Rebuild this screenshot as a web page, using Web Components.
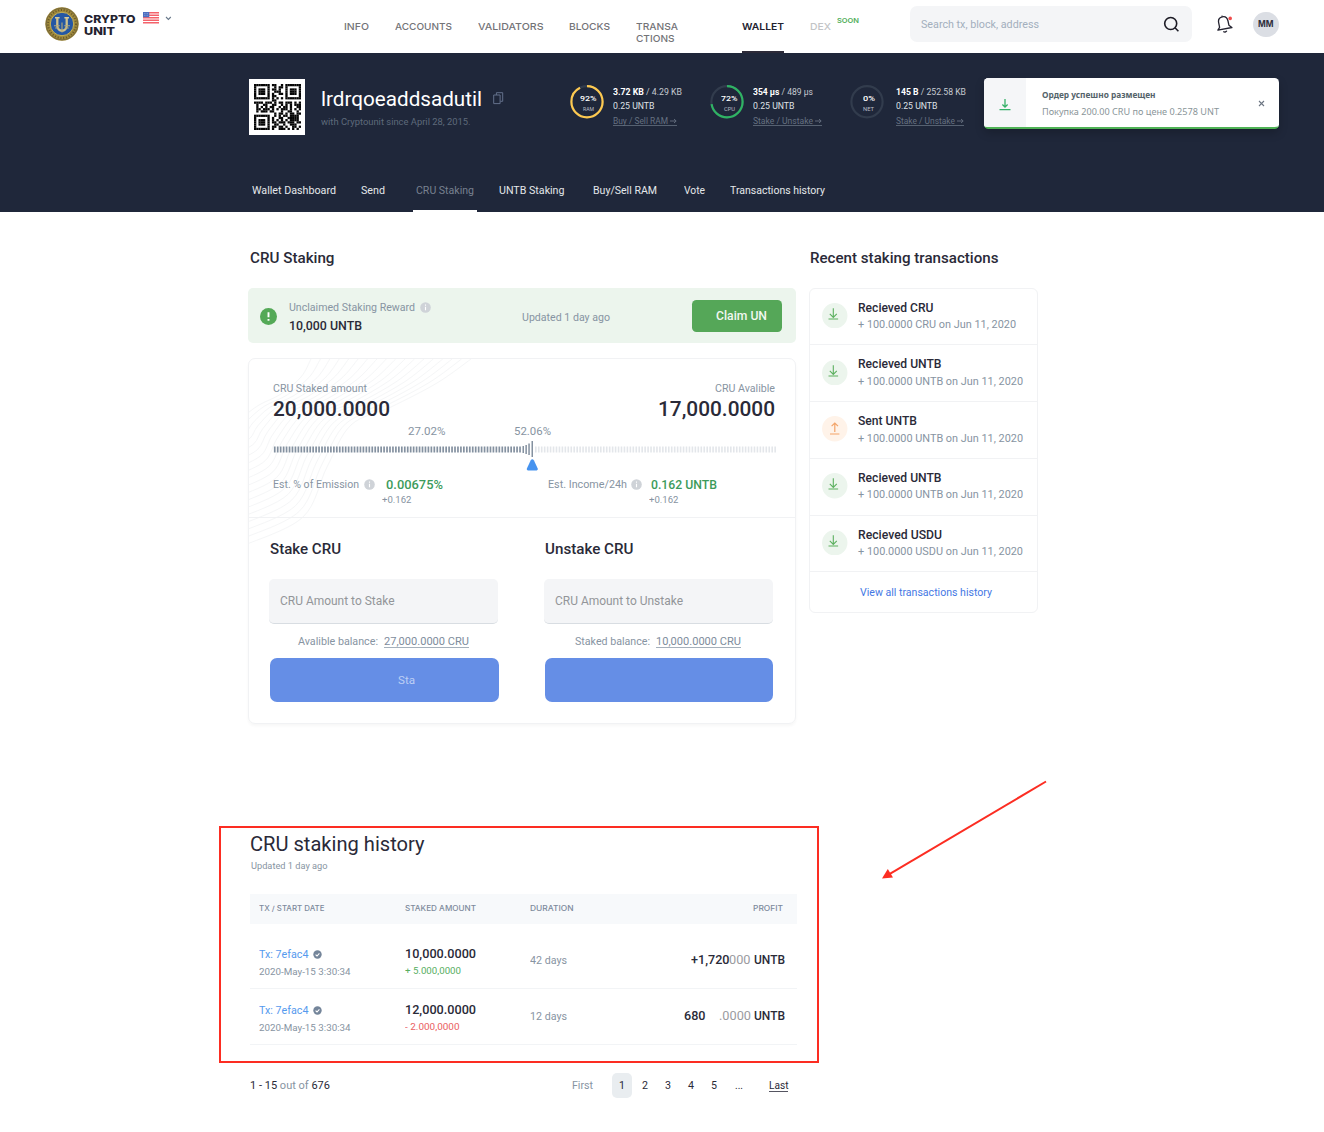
<!DOCTYPE html>
<html lang="en">
<head>
<meta charset="utf-8">
<title>CryptoUnit wallet</title>
<style>
html,body{margin:0;padding:0;background:#fff}
body{width:1324px;height:1132px;overflow:hidden;font-family:Roboto,"Noto Sans","Liberation Sans",sans-serif;color:#2a2a38}
</style>
</head>
<body>
<wallet-page></wallet-page>
<script>
const define = (tag, css, view) => customElements.define(tag, class extends HTMLElement {
  constructor() {
    super();
    const root = this.attachShadow({ mode: 'open' });
    root.innerHTML = `<style>:host{display:block;box-sizing:border-box}*{box-sizing:border-box}${css}</style>` + view(name => this.getAttribute(name));
  }
});

/* page frame */
define('wallet-page', `
  :host{position:relative;width:1324px;height:1132px}
  main{display:flex;align-items:flex-start;padding:35px 0 0 248px;gap:13.5px;height:614px}
  .left{width:548px}.right{width:228.5px}
  h2{margin:0 0 18.5px 2px;font-size:14px}
  .right h2{margin-left:.5px}
  .note{position:absolute;left:219px;top:826px;width:600px;height:237px;border:2px solid #fc2d22}
  .arrow{position:absolute;left:875px;top:775px}
`, () => `
  <site-header></site-header>
  <account-hero></account-hero>
  <main>
    <div class="left"><h2><ui-text s="14.4" b="500" lh="22" w="84.5" y="1">CRU Staking</ui-text></h2>
      <reward-banner></reward-banner><stake-panel></stake-panel></div>
    <div class="right"><h2><ui-text s="14.4" b="500" lh="22" w="188.5" y="1">Recent staking transactions</ui-text></h2>
      <tx-list></tx-list></div>
  </main>
  <staking-history></staking-history>
  <page-nav></page-nav>
  <div class="note"></div>
  <svg class="arrow" width="180" height="110"><path d="M171 6.5 14 99.3" stroke="#fc2d22" stroke-width="2"/><path d="M7 103.4 12.8 94 18 102.6Z" fill="#fc2d22"/></svg>
`);

/* header */
define('site-header', `
  :host{display:flex;align-items:flex-start;height:53px;padding-left:45px;background:#fff}
  .brand{margin:13px 0 0 5px;width:52px}
  .flag{margin:12px 0 0 7px}.chev{margin:15px 0 0 6px}
  nav{display:flex;gap:26px;margin-left:171.7px;height:53px}
  .wrap{width:79.5px}
  search-box{margin:6px 0 0 51.3px}
  .bell{margin:14px 0 0 25px}
  .av{width:25.5px;height:25.5px;border-radius:50%;background:#dbdee4;margin:11.5px 0 0 20.5px;display:flex;justify-content:center;align-items:center}
  .dex{display:flex;gap:6px}
  coin-logo{margin-top:7px}
`, () => `
  <coin-logo></coin-logo>
  <div class="brand"><ui-text f="Inter" s="11" b="800" lh="12" w="51.5" c="#23222f">CRYPTO</ui-text><ui-text f="Inter" s="11" b="800" lh="12" w="31" c="#23222f">UNIT</ui-text></div>
  <svg class="flag" width="16" height="11.5" viewBox="0 0 16 11.5"><rect width="16" height="11.5" fill="#fff"/><path d="M0 .8h16M0 3.2h16M0 5.7h16M0 8.2h16M0 10.7h16" stroke="#f4626b" stroke-width="1.4"/><rect width="6.3" height="5.2" fill="#4d6fc0"/><path d="M1 1.5h4.4M1 3.3h4.4" stroke="#a9b9e3" stroke-width=".6" stroke-dasharray=".8 .8"/></svg>
  <svg class="chev" width="7" height="6" fill="none" stroke="#68788a" stroke-width="1.1"><path d="M1 2 3.4 4.4 5.8 2"/></svg>
  <nav>
    <nav-item w="25">INFO</nav-item><nav-item w="57">ACCOUNTS</nav-item><nav-item w="65.5">VALIDATORS</nav-item><nav-item w="41">BLOCKS</nav-item>
    <div class="wrap"><nav-item w="42" second="CTIONS">TRANSA</nav-item></div>
    <nav-item w="42" active>WALLET</nav-item>
    <div class="dex"><nav-item w="21" c="#c2c4c6">DEX</nav-item><ui-text f="Inter" s="6.8" b="600" lh="12" w="22" c="#4fae59" mt="15">SOON</ui-text></div>
  </nav>
  <search-box></search-box>
  <svg class="bell" width="16" height="21" viewBox="0 0 16 21" fill="none"><path d="M.9 16.2 2.6 13.4 1.7 8.9C1 5.6 2.6 3.4 5.3 2.8S10.3 4 11 7l.9 4.2 3 2.3Z" stroke="#23222f" stroke-width="1.3" stroke-linejoin="round"/><path d="M5.2 2.7 4.9 1.6M6.3 17.4c1.3 1 2.8.8 3.5-.6" stroke="#23222f" stroke-width="1.3"/><circle cx="13.2" cy="4.4" r="1.8" fill="#f04c4c"/></svg>
  <div class="av"><ui-text f="Inter" s="8.8" b="700" lh="14" w="15.5" c="#2f2e3c">MM</ui-text></div>
`);

define('coin-logo', `:host{width:34px;height:34px}svg{display:block}`, () => `
  <svg width="34" height="34" viewBox="0 0 34 34"><circle cx="17" cy="17" r="16.7" fill="#a08a3c"/><circle cx="17" cy="17" r="15.9" fill="none" stroke="#77683a" stroke-width="1"/><circle cx="17" cy="17" r="14" fill="none" stroke="#6b5a28" stroke-width="2" stroke-dasharray="1.1 1.7"/><circle cx="17" cy="17" r="11.7" fill="#2457a4" stroke="#c9b153" stroke-width="1"/><path d="M10 10.7h4.6M19.4 10.7H24" stroke="#d6cda0" stroke-width="1.5"/><path d="M12.3 10.7v8.1c0 6.6 9.4 6.6 9.4 0v-8.1" fill="none" stroke="#cfc28e" stroke-width="2.3"/><path d="M9 18.8h5.8M19.2 18.8H25M10.2 21h4M19.8 21h4M17 15.5v10" fill="none" stroke="#b3a877" stroke-width="1.1"/></svg>
`);

define('nav-item', `
  :host{height:53px;padding-top:20.5px;position:relative}
  :host([active])::after{content:"";position:absolute;left:0;right:0;bottom:0;height:2.5px;background:#2c2a38}
`, a => `<ui-text f="Inter" s="9.6" b="${a('active') !== null ? 600 : 500}" lh="12" w="${a('w')}" c="${a('active') !== null ? '#23222f' : a('c') || '#737377'}"><slot></slot></ui-text>
  ${a('second') ? `<ui-text f="Inter" s="9.6" b="500" lh="12" w="38.5" c="#737377">${a('second')}</ui-text>` : ''}`);

define('search-box', `
  :host{display:flex;justify-content:space-between;align-items:center;width:282px;height:36px;border-radius:7px;background:#f4f5f7;padding:0 11.5px 0 11px}
`, () => `<ui-text s="10.7" w="118" c="#a3afbd" y=".5">Search tx, block, address</ui-text>
  <svg width="17" height="17" fill="none" stroke="#1c1b25" stroke-width="1.6"><circle cx="7.7" cy="7.5" r="6"/><path d="m12 11.8 3.4 3.4"/></svg>`);

/* hero */
define('account-hero', `
  :host{height:159px;background:#1f273a;padding-left:248.5px;display:flex;flex-direction:column;justify-content:space-between}
  .top{display:flex;align-items:flex-start;padding-top:25px}
  .who{margin:10px 0 0 16.2px;width:161.3px}
  .copy{margin:13.5px 0 0 10.5px}
  resource-gauge{margin-top:7px}
  .tabs{display:flex;padding-left:3.5px;height:31px}
`, () => `
  <div class="top">
    <qr-code></qr-code>
    <div class="who"><ui-text s="20" lh="22" w="161" c="#fff" y="-.5">lrdrqoeaddsadutil</ui-text><ui-text s="9" lh="14" w="149.5" c="#5e6a7b" mt="5">with Cryptounit since April 28, 2015.</ui-text></div>
    <svg class="copy" width="11" height="13" fill="none" stroke="#63708a" stroke-width="1"><path d="M.7 3h6.4v8.6H.7ZM3.4 3V.7h6.3v8.6H7.4"/></svg>
    <resource-gauge style="margin-left:65.6px;width:140.7px" pct="92" name="RAM" color="#fdc950" used="3.72 KB" total="4.29 KB" tw="69" link="Buy / Sell RAM" lw="64"></resource-gauge>
    <resource-gauge style="width:139.5px" pct="72" name="CPU" color="#2fb364" used="354 µs" total="489 µs" tw="60" link="Stake / Unstake" lw="69"></resource-gauge>
    <resource-gauge style="width:134px" pct="0" name="NET" color="none" used="145 B" total="252.58 KB" tw="70" link="Stake / Unstake" lw="68" gap="12"></resource-gauge>
    <toast-card></toast-card>
  </div>
  <div class="tabs">
    <hero-tab w="84">Wallet Dashboard</hero-tab><hero-tab w="24" ml="25">Send</hero-tab><hero-tab w="58" ml="31" active>CRU Staking</hero-tab><hero-tab w="65.5" ml="25">UNTB Staking</hero-tab><hero-tab w="64" ml="28">Buy/Sell RAM</hero-tab><hero-tab w="21" ml="27">Vote</hero-tab><hero-tab w="95" ml="25">Transactions history</hero-tab>
  </div>
`);

define('hero-tab', `
  :host{position:relative;height:31px}
  :host([active])::after{content:"";position:absolute;left:-3.5px;width:64px;bottom:0;height:2.3px;background:#fff}
`, a => `<ui-text s="10.6" lh="20" w="${a('w')}" c="${a('active') !== null ? '#788190' : '#e4e7ea'}" style="margin-left:${a('ml') || 0}px"><slot></slot></ui-text>
  ${a('ml') ? `<style>:host([active])::after{left:${a('ml') - 3.5}px}</style>` : ''}`);

const QR = [
  '#######.##..#.#######','#.....#..#.##.#.....#','#.###.#.##.#..#.###.#','#.###.#..###..#.###.#','#.###.#.#..##.#.###.#','#.....#.##....#.....#','#######.#.#.#.#######',
  '........##...........','####.###.#.##.###.#.#','.#..##..##..#.#.#.###','.#.#.#.##..#.##.#..##','.##.###.#.#.###.#.#.#','.#.###.##...#..##..#.',
  '.........#.##.#.##.##','#######..#.#.##.####.','#.....#.#..##..#####.','#.###.#.#.#.#.#.####.','#.###.#.##.###.###.##','#.###.#..##..#..###..','#.....#.##.##.#..##.#','#######.#..###.#.#.#.'];
define('qr-code', `:host{width:56.5px;height:56px;margin-top:1px;background:#fff;padding:5px}svg{display:block}`, () =>
  `<svg width="47" height="46" viewBox="0 0 21 21" preserveAspectRatio="none" fill="#050505">${QR.map((r, y) => [...r].map((c, x) => c === '#' ? `<rect x="${x}" y="${y}" width="1.03" height="1.03"/>` : '').join('')).join('')}</svg>`);

define('resource-gauge', `
  :host{display:flex;align-items:flex-start}
  .ring{display:grid;width:34px;height:34px;flex:none}
  .ring>*{grid-area:1/1}
  .lab{display:flex;flex-direction:column;align-items:center;padding:7px 0 0 3.5px}
  .lk{display:flex;align-items:center;justify-content:space-between;height:14.5px;border:0}
  .lk svg{margin-top:1px}
  .line{height:1px;background:#566171;margin-top:-2.7px}
`, a => {
  const c = 2 * Math.PI * 15.6;
  return `<div class="ring"><svg width="34" height="34" fill="none" stroke-width="2.2"><circle cx="17" cy="16.7" r="15.6" stroke="#323c4d"/><circle cx="17" cy="16.7" r="15.6" stroke="${a('color')}" stroke-dasharray="${c * a('pct') / 100} ${c}" transform="rotate(-90 17 16.7)"/></svg>
    <div class="lab"><ui-text s="7.8" b="500" lh="14" w="${a('pct') == 0 ? 12 : 16.5}" c="#fff">${a('pct')}%</ui-text><ui-text s="5.6" lh="6" w="11" c="#b9bec7" y="-.5">${a('name')}</ui-text></div></div>
  <div style="margin:-.5px 0 0 ${a('gap') || 9}px"><ui-text s="8.9" lh="14.5" w="${a('tw')}" c="#c6cad1"><b style="color:#fff">${a('used')}</b> / ${a('total')}</ui-text><ui-text s="8.9" lh="14.5" w="41.5" c="#dfe2e6">0.25 UNTB</ui-text>
  <div style="width:${a('lw')}px"><div class="lk"><ui-text s="8.9" lh="14.5" w="${a('lw') - 9}" c="#667181" y="-.5">${a('link')}</ui-text><svg width="7" height="6" fill="none" stroke="#667181" stroke-width=".9"><path d="M0 3h6M4 1l2.2 2L4 5"/></svg></div><div class="line"></div></div></div>`;
});

define('toast-card', `
  :host{display:flex;width:295px;height:50.5px;border-radius:4.5px;background:#fff;border-bottom:2px solid #4fb255;overflow:hidden;box-shadow:0 4px 10px #0003;flex:none}
  .ic{width:42.5px;background:#f5f6f8;padding:19px 0 0 15.5px}
  .tx{margin:10px 0 0 15.5px;width:177px}
  .x{margin:22px 0 0 39.5px}
`, () => `<div class="ic"><svg width="12" height="14" fill="none" stroke="#35b168" stroke-width="1.3"><path d="M.5 11.7h11M6 1v8M3.4 6.5 6 9.1l2.6-2.6"/></svg></div>
  <div class="tx"><ui-text f="Noto Sans" s="9.1" b="700" lh="14" w="113.5" c="#54636a">Ордер успешно размещен</ui-text><ui-text f="Noto Sans" s="9.2" lh="14" w="177" c="#8a9599" mt="2.5">Покупка 200.00 CRU по цене 0.2578 UNT</ui-text></div>
  <svg class="x" width="8" height="8" stroke="#6d7683" stroke-width="1.1"><path d="m1 1 5 5M6 1 1 6"/></svg>`);

/* shared icons */
define('info-dot', `:host{width:11px;height:11px;flex:none}svg{display:block}`, () =>
  `<svg width="11" height="11"><circle cx="5.5" cy="5.5" r="5.3" fill="#cfd3d8"/><path d="M5.5 4.8v3.4M5.5 2.5v1.2" stroke="#fff" stroke-width="1.1"/></svg>`);

/* reward */
define('reward-banner', `
  :host{display:flex;align-items:flex-start;height:55.5px;margin-top:17px;border-radius:5px;background:#ecf5ed;padding-left:12.3px}
  .ok{margin-top:20px}.c{margin:11px 0 0 11.3px;width:233px}
  .r{display:flex;gap:5px;align-items:center}
  .b{width:90.5px;height:32px;margin:12px 0 0 82px;border-radius:4.5px;background:#55a758;padding:7.5px 0 0 24.5px}
`, () => `<svg class="ok" width="17" height="17"><circle cx="8.5" cy="8.5" r="8.5" fill="#54a957"/><path d="M8.5 4.3v5M8.5 10.9v1.8" stroke="#fff" stroke-width="1.9"/></svg>
  <div class="c"><div class="r"><ui-text s="10.7" lh="17" w="126" c="#8794a2">Unclaimed Staking Reward</ui-text><info-dot></info-dot></div><ui-text s="12" b="500" lh="18" w="73" mt="1">10,000 UNTB</ui-text></div>
  <ui-text s="10.7" lh="18" w="88" c="#8794a2" mt="21">Updated 1 day ago</ui-text>
  <div class="b"><ui-text s="11.9" b="500" lh="17" w="51" c="#f1f8f1" y="1">Claim UN</ui-text></div>`);

/* staking card */
define('contour-lines', `:host{position:absolute;left:0;top:0;width:230px;height:190px;overflow:hidden;pointer-events:none}`, () => {
  const inner = [[62, 0], [52, 18], [32, 35], [10, 46], [-6, 58], [-10, 62], [-14, 66]];
  const outer = [[222, 0], [188, 24], [142, 48], [102, 66], [78, 108], [54, 158], [-4, 186]];
  let out = '';
  for (let i = 0; i < 18; i++) {
    const k = i / 17;
    const p = inner.map((q, j) => [q[0] + (outer[j][0] - q[0]) * k, q[1] + (outer[j][1] - q[1]) * k]);
    let d = `M${p[0]}`;
    for (let j = 0; j < p.length - 1; j++) {
      const a = p[Math.max(j - 1, 0)], b = p[j], c = p[j + 1], e = p[Math.min(j + 2, p.length - 1)];
      d += `C${b[0] + (c[0] - a[0]) / 6} ${b[1] + (c[1] - a[1]) / 6} ${c[0] - (e[0] - b[0]) / 6} ${c[1] - (e[1] - b[1]) / 6} ${c[0]} ${c[1]}`;
    }
    out += `<path d="${d}"/>`;
  }
  return `<svg width="230" height="190" fill="none" stroke="#f5f6f7" stroke-width="1">${out}</svg>`;
});

define('stake-panel', `
  :host{position:relative;height:366.5px;margin-top:14.5px;border:1px solid #f1f2f4;border-radius:7px;box-shadow:0 2px 3px #00000009}
  .sum{position:relative;height:159px;border-bottom:1px solid #f1f2f4;padding:20.5px 20.2px 0 24.2px}
  .row{display:flex;justify-content:space-between}
  .pct{display:flex;padding-left:135px;gap:68.5px}
  .est{display:flex;margin-top:4.5px}
  .est>div{width:274.5px;flex:none}.l{display:flex;align-items:center}
  info-dot{margin:0 10.5px 0 5px}
  .est>div+div info-dot{margin:0 9.5px 0 4px}
  .forms{display:flex;padding-left:20px;gap:45.5px;position:relative}
  stake-meter{display:block}
`, () => `<contour-lines></contour-lines>
  <div class="sum">
    <div class="row"><ui-text s="10.6" lh="18" w="94" c="#8794a2" y=".5">CRU Staked amount</ui-text><ui-text s="10.6" lh="18" w="60" c="#8794a2" y=".5">CRU Avalible</ui-text></div>
    <div class="row"><ui-text s="19.8" b="500" lh="25" w="117">20,000.0000</ui-text><ui-text s="19.8" b="500" lh="25" w="117">17,000.0000</ui-text></div>
    <div class="pct"><ui-text s="10.5" lh="20" w="37.5" c="#8794a2">27.02%</ui-text><ui-text s="10.5" lh="20" w="37" c="#8794a2">52.06%</ui-text></div>
    <stake-meter></stake-meter>
    <div class="est">
      <div><div class="l"><ui-text s="10.7" lh="16" w="86" c="#8794a2">Est. % of Emission</ui-text><info-dot></info-dot><ui-text s="12.2" b="500" lh="16" w="57" c="#3c9b5b">0.00675%</ui-text></div><ui-text s="9" lh="15" w="29.5" c="#8794a2" style="margin-left:108.5px">+0.162</ui-text></div>
      <div><div class="l"><ui-text s="10.7" lh="16" w="79" c="#8794a2">Est. Income/24h</ui-text><info-dot></info-dot><ui-text s="12.2" b="500" lh="16" w="66" c="#3c9b5b">0.162 UNTB</ui-text></div><ui-text s="9" lh="15" w="29.5" c="#8794a2" style="margin-left:101px">+0.162</ui-text></div>
    </div>
  </div>
  <div class="forms">
    <stake-form title-text="Stake CRU" tw="71" hint="CRU Amount to Stake" hw="114.5" bal="Avalible balance:" bw="80" val="27,000.0000 CRU" off="29" button="Sta"></stake-form>
    <stake-form title-text="Unstake CRU" tw="88.5" hint="CRU Amount to Unstake" hw="128" bal="Staked balance:" bw="75" val="10,000.0000 CRU" off="31.5"></stake-form>
  </div>`);

define('stake-meter', `:host{height:30px}svg{display:block}`, () => {
  let t = '';
  const pitch = 2.955;
  for (let x = .9; x < 249; x += pitch) t += `<rect x="${x.toFixed(2)}" y="4.5" width="1.7" height="6" fill="#8491a0"/>`;
  for (let x = 262; x < 501.5; x += pitch) t += `<rect x="${x.toFixed(2)}" y="4.5" width="1.6" height="6" fill="#e3e6ea"/>`;
  [[249.5, 4, 7], [252.4, 3, 9], [255.3, 1.5, 11.5], [258.5, -1, 16]].forEach(([x, y, h]) => t += `<rect x="${x}" y="${y}" width="1.5" height="${h}" fill="#8491a0"/>`);
  return `<svg width="504" height="30" overflow="visible">${t}<path d="M257.6 18.6q1.7-2.6 3.4 0l3.7 8q.6 1.8-1 1.8h-8.8q-1.6 0-1-1.8Z" fill="#4793ef"/></svg>`;
});

define('stake-form', `
  :host{width:229px}
  .in{height:45px;margin-top:17.5px;border-radius:5px;background:#f4f5f7;border-bottom:1.5px solid #d8dde2;padding:13.5px 0 0 11px}
  .bal{display:flex;gap:6px;height:16px;margin:9.5px 0 0}
  .u{border-bottom:1px solid #a5b0bb;height:14.7px}
  .btn{height:44px;margin:8.5px 0 0 1.3px;border-radius:7px;background:#658ee6;padding:14px 0 0 128px;width:228.5px}
`, a => `<ui-text s="14.4" b="500" lh="24" w="${a('tw')}" mt="19.5" y="1.3" style="margin-left:1.2px">${a('title-text')}</ui-text>
  <div class="in"><ui-text s="11.9" lh="18" w="${a('hw')}" c="#939599" y=".4">${a('hint')}</ui-text></div>
  <div class="bal" style="padding-left:${a('off')}px"><ui-text s="10.7" w="${a('bw')}" c="#8794a2" y=".8">${a('bal')}</ui-text><div class="u"><ui-text s="10.7" w="85" c="#7e8c9c" y=".8">${a('val')}</ui-text></div></div>
  <div class="btn">${a('button') ? `<ui-text s="11.7" w="17" c="#bccff5">${a('button')}</ui-text>` : ''}</div>`);

/* recent list */
define('tx-list', `
  :host{border:1px solid #f1f2f4;border-radius:6px;height:325.5px;margin:15.9px 0 0 -.5px}
  .more{padding:12.5px 0 0 50px}
`, () => `
  <tx-item t="Recieved CRU" tw="75.5" s="+ 100.0000 CRU on Jun 11, 2020" sw="158"></tx-item>
  <tx-item t="Recieved UNTB" tw="83.5" s="+ 100.0000 UNTB on Jun 11, 2020" sw="165"></tx-item>
  <tx-item t="Sent UNTB" tw="59" s="+ 100.0000 UNTB on Jun 11, 2020" sw="165" sent></tx-item>
  <tx-item t="Recieved UNTB" tw="83.5" s="+ 100.0000 UNTB on Jun 11, 2020" sw="165"></tx-item>
  <tx-item t="Recieved USDU" tw="84" s="+ 100.0000 USDU on Jun 11, 2020" sw="165"></tx-item>
  <div class="more"><ui-text s="10.8" lh="17" w="132" c="#4478e4" y="-.6">View all transactions history</ui-text></div>`);

define('tx-item', `
  :host{display:flex;height:56.75px;border-bottom:1px solid #f1f2f4;padding-left:12px}
  svg{margin:14.4px 10px 0 0;flex:none}
`, a => `<svg width="25.5" height="25.5" viewBox="0 0 25.5 25.5" fill="none">${a('sent') !== null
    ? '<circle cx="12.75" cy="12.75" r="12.7" fill="#fff3e9"/><path d="M8 18h9.4M12.8 16V7.2M9.6 10.2l3.2-3.2 3.2 3.2" stroke="#f3a469" stroke-width="1.2"/>'
    : '<circle cx="12.75" cy="12.75" r="12.7" fill="#ecf5ed"/><path d="M6.5 16h9.6M11.3 5.2v9M7.8 10.8l3.5 3.6 3.5-3.6" stroke="#5cb05f" stroke-width="1.1"/>'}</svg>
  <div><ui-text s="12" b="500" lh="17.5" w="${a('tw')}" mt="11" y="-.3">${a('t')}</ui-text><ui-text s="10.8" lh="17" w="${a('sw')}" c="#8794a2" y="-.6">${a('s')}</ui-text></div>`);

/* history */
define('staking-history', `
  :host{padding-left:250px;width:797px;padding-top:4.5px}
  .head{display:grid;height:30px;background:#f7f9fb;margin-top:21px;padding:7px 14px 0 8.5px;grid-template-columns:146.5px 125px 1fr auto}
`, () => `<ui-text s="20" lh="26" w="174.5">CRU staking history</ui-text><ui-text s="9" lh="14" w="76.5" c="#8794a2" mt="2.5" style="margin-left:.7px">Updated 1 day ago</ui-text>
  <div class="head"><ui-text f="Inter" s="7.2" b="500" lh="15" w="65.5" c="#7d8a9b">TX / START DATE</ui-text><ui-text f="Inter" s="7.2" b="500" lh="15" w="71" c="#7d8a9b">STAKED AMOUNT</ui-text><ui-text f="Inter" s="7.2" b="500" lh="15" w="43.5" c="#7d8a9b">DURATION</ui-text><ui-text f="Inter" s="7.2" b="500" lh="15" w="30" c="#7d8a9b">PROFIT</ui-text></div>
  <history-row style="height:65px;padding-top:22px" amount="10,000.0000" delta="+ 5.000,0000" dw="56" dc="#57ae5f" days="42 days" a="+1,720" aw="38.5" b="000" bw="21.5" g="0"></history-row>
  <history-row style="height:56px;padding-top:13px" amount="12,000.0000" delta="- 2.000,0000" dw="54.5" dc="#ea6162" days="12 days" a="680" aw="21.5" b=".0000" bw="32" g="13.5"></history-row>`);

define('history-row', `
  :host{display:flex;align-items:flex-start;border-bottom:1px solid #f2f4f6;padding-left:9px}
  .tx{width:146px}.l{display:flex;align-items:center;gap:4px}
  .am{width:125px}.p{display:flex;margin:5.5px 12px 0 0}
`, a => `<div class="tx"><div class="l"><ui-text s="10.8" lh="17" w="49.5" c="#559aee">Tx: 7efac4</ui-text><svg width="9" height="9" fill="none"><circle cx="4.5" cy="4.5" r="4.2" fill="#74859a"/><path d="m2.6 4.7 1.4 1.3 2.4-2.6" stroke="#fff" stroke-width="1.1"/></svg></div><ui-text s="9.2" lh="17" w="91.5" c="#8794a2" y="-.4">2020-May-15 3:30:34</ui-text></div>
  <div class="am"><ui-text s="12" b="500" lh="17" w="71">${a('amount')}</ui-text><ui-text s="9.1" lh="16" w="${a('dw')}" c="${a('dc')}">${a('delta')}</ui-text></div>
  <ui-text s="10.8" lh="17" w="37" c="#8794a2" mt="5.5">${a('days')}</ui-text>
  <div style="flex:1"></div>
  <div class="p"><ui-text s="12" b="500" lh="17" w="${a('aw')}">${a('a')}</ui-text><ui-text s="12" lh="17" w="${a('bw')}" c="#9b9ba0" style="margin-left:${a('g')}px">${a('b')}</ui-text><ui-text s="12" b="500" lh="17" w="31" style="margin-left:3.5px">UNTB</ui-text></div>`);

/* pagination */
define('page-nav', `
  :host{display:flex;align-items:center;height:25px;margin:27.5px 0 0 250px;width:539px}
  .n{width:23.1px;display:flex;justify-content:center}
  .on{width:20px;height:25px;border-radius:5px;background:#e9edf0;display:flex;align-items:center;justify-content:center;margin:0 1.5px 0 19px}
  .u{border-bottom:1px solid #555561;height:14.5px;margin:-1px 0 0 17px}
`, () => `<ui-text s="10.9" w="80" y=".6"><span>1 - 15</span> <span style="color:#8794a2">out of</span> <span>676</span></ui-text>
  <div style="width:242px"></div><ui-text s="10.7" w="21" c="#8794a2" y=".8">First</ui-text><div class="on"><ui-text s="10.7" w="6" y=".8">1</ui-text></div>
  ${[2, 3, 4, 5].map(n => `<div class="n"><ui-text s="10.7" w="6" y=".8">${n}</ui-text></div>`).join('')}<div class="n" style="width:26px"><ui-text s="10.7" w="8" y=".8">...</ui-text></div>
  <div class="u"><ui-text s="10.7" w="19.5" y=".8">Last</ui-text></div>`);

/* One line of text whose glyphs are stretched so that it fills the width given in "w". */
customElements.define('ui-text', class extends HTMLElement {
  constructor() {
    super();
    this.attachShadow({ mode: 'open' }).innerHTML = `<style>:host{display:block;flex:none;white-space:nowrap}span{display:inline-block;transform-origin:0 50%}</style><span><slot></slot></span>`;
  }
  connectedCallback() {
    const a = (n, d) => this.getAttribute(n) || d, s = this.style;
    s.fontFamily = `"${a('f', 'Roboto')}","Noto Sans",sans-serif`;
    s.fontSize = a('s', 11) + 'px';
    s.fontWeight = a('b', 400);
    s.lineHeight = a('lh', 16) + 'px';
    s.height = a('lh', 16) + 'px';
    s.color = a('c', '#2a2a38');
    if (a('mt')) s.marginTop = a('mt') + 'px';
    const w = +a('w', 0);
    s.width = w + 'px';
    const span = this.shadowRoot.querySelector('span');
    span.style.transform = 'none';
    const natural = span.getBoundingClientRect().width;
    if (natural && w) span.style.transform = `translateY(${a('y', 0)}px) scaleX(${(w / natural).toFixed(4)})`;
  }
});
</script>
</body>
</html>
